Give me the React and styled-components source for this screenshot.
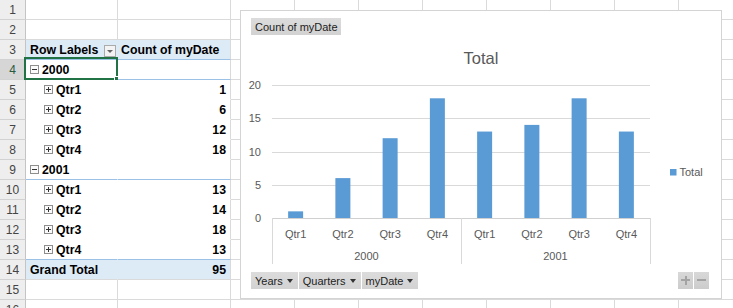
import React from 'react';
import styled, { createGlobalStyle } from 'styled-components';

const GlobalStyle = createGlobalStyle`
  html, body { margin: 0; padding: 0; background: #fff; overflow: hidden; }
  body { font-family: "Liberation Sans", Arial, sans-serif; }
  #root { width: 733px; height: 308px; }
`;

const GRID = '#dadada';
const PIVOT_LINE = '#9bc2e6';
const PIVOT_BG = '#ddebf7';

const Page = styled.div`
  position: relative;
  width: 733px;
  height: 308px;
  overflow: hidden;
`;

const Sheet = styled.div`
  display: flex;
  flex-direction: column;
`;

const Row = styled.div`
  display: grid;
  grid-template-columns: 26px 92px 113px repeat(8, 64px);
  height: 20px;
  flex: none;
`;

const RowHead = styled.div`
  box-sizing: border-box;
  border-right: 1px solid #c4c4c4;
  border-bottom: 1px solid #d2d2d2;
  background: ${p => (p.$selected ? '#d6d6d6' : '#eeeeee')};
  color: ${p => (p.$selected ? '#2a5a3e' : '#444')};
  font-family: "Liberation Sans", Arial, sans-serif;
  font-size: 12px;
  display: flex;
  align-items: center;
  justify-content: center;
`;

const Cell = styled.div`
  position: relative;
  box-sizing: border-box;
  border-right: 1px solid ${p => p.$right || GRID};
  border-bottom: 1px solid ${p => p.$bottom || GRID};
  background: ${p => p.$bg || '#fff'};
  display: flex;
  align-items: center;
  justify-content: ${p => (p.$align === 'right' ? 'flex-end' : 'flex-start')};
  padding: 0 ${p => (p.$padRight ?? 4)}px 0 ${p => p.$indent ?? 4}px;
  font-size: 12.3px;
  font-weight: bold;
  color: #000;
  white-space: nowrap;
  gap: 3px;
`;

const Toggle = styled.span`
  position: relative;
  box-sizing: border-box;
  width: 9px;
  height: 9px;
  border: 1px solid #8e8e8e;
  background: #fafafa;
  flex: none;
  &::before {
    content: '';
    position: absolute;
    left: 1px;
    right: 1px;
    top: 3px;
    height: 1px;
    background: #333;
  }
  &::after {
    content: '';
    position: absolute;
    top: 1px;
    bottom: 1px;
    left: 3px;
    width: 1px;
    background: #333;
    display: ${p => (p.$open ? 'none' : 'block')};
  }
`;

const FilterButton = styled.span`
  position: relative;
  box-sizing: border-box;
  margin-left: auto;
  align-self: flex-end;
  margin-bottom: 2px;
  width: 12px;
  height: 12px;
  border: 1px solid #ababab;
  background: #f3f3f3;
  &::after {
    content: '';
    position: absolute;
    left: 2px;
    top: 4px;
    border-left: 3px solid transparent;
    border-right: 3px solid transparent;
    border-top: 3px solid #666;
  }
`;

const Selection = styled.div`
  position: absolute;
  top: -3px;
  left: -2px;
  right: -1px;
  bottom: -1px;
  border: 2px solid #217346;
  pointer-events: none;
`;

const FillHandle = styled.span`
  position: absolute;
  right: -5px;
  bottom: -5px;
  width: 5px;
  height: 5px;
  background: #217346;
  border: 1px solid #fff;
`;

/* ---------- Chart ---------- */

const ChartPanel = styled.div`
  position: absolute;
  left: 240px;
  top: 10px;
  width: 482px;
  height: 289px;
  box-sizing: border-box;
  border: 1px solid #d4d4d4;
  background: #fff;
  display: flex;
  flex-direction: column;
  font-family: "Liberation Sans", Arial, sans-serif;
`;

const TopBar = styled.div`
  display: flex;
  padding: 7px 0 0 10px;
`;

const FieldButton = styled.div`
  display: flex;
  align-items: center;
  gap: 4px;
  height: 17px;
  box-sizing: border-box;
  padding: 0 ${p => (p.$arrow ? 5 : 3)}px 0 4px;
  background: linear-gradient(#dcdcdc, #d2d2d2);
  color: #222;
  font-size: 11px;
  white-space: nowrap;
`;

const Caret = styled.span`
  width: 0;
  height: 0;
  border-left: 3.5px solid transparent;
  border-right: 3.5px solid transparent;
  border-top: 4px solid #333;
`;

const Title = styled.div`
  margin-top: 13px;
  height: 20px;
  line-height: 20px;
  font-size: 16.5px;
  color: #595959;
  text-align: center;
`;

const Plot = styled.svg`
  display: block;
  flex: none;
`;

const BottomBar = styled.div`
  display: flex;
  align-items: center;
  gap: 1px;
  padding: 4px 12px 0 10px;
`;

const Spacer = styled.div`
  flex: 1;
`;

const ZoomButton = styled.div`
  position: relative;
  width: 15px;
  height: 17px;
  background: linear-gradient(#d8d8d8, #cccccc);
  &::before {
    content: '';
    position: absolute;
    left: 3px;
    top: 7px;
    width: 9px;
    height: 2px;
    background: #a3a3a3;
  }
  &::after {
    content: '';
    position: absolute;
    left: 6.5px;
    top: 3.5px;
    width: 2px;
    height: 9px;
    background: #a3a3a3;
    display: ${p => (p.$plus ? 'block' : 'none')};
  }
`;

const data = [
  { year: '2000', q: 'Qtr1', v: 1 },
  { year: '2000', q: 'Qtr2', v: 6 },
  { year: '2000', q: 'Qtr3', v: 12 },
  { year: '2000', q: 'Qtr4', v: 18 },
  { year: '2001', q: 'Qtr1', v: 13 },
  { year: '2001', q: 'Qtr2', v: 14 },
  { year: '2001', q: 'Qtr3', v: 18 },
  { year: '2001', q: 'Qtr4', v: 13 },
];

function ChartBody() {
  const left = 31;
  const right = 409;
  const zero = 150;
  const unit = 133 / 20;
  const cat = (right - left) / data.length;
  const barW = 15;
  const text = { fontFamily: '"Liberation Sans", Arial, sans-serif', fontSize: 11, fill: '#595959' };
  return (
    <Plot width="480" height="200" viewBox="0 0 480 200">
      {[0, 5, 10, 15, 20].map(t => {
        const y = Math.round(zero - t * unit) + 0.5;
        return (
          <g key={t}>
            <line x1={left} x2={right} y1={y} y2={y} stroke={t === 0 ? '#d0d0d0' : '#d9d9d9'} strokeWidth="1" />
            <text x="20" y={y + 3.5} textAnchor="end" {...text}>{t}</text>
          </g>
        );
      })}
      {data.map((d, i) => {
        const cx = left + cat * (i + 0.5);
        const h = d.v * unit;
        return (
          <g key={i}>
            <rect x={cx - barW / 2} y={zero - h} width={barW} height={h} fill="#5b9bd5" />
            <text x={cx} y="170" textAnchor="middle" {...text}>{d.q}</text>
          </g>
        );
      })}
      {[left, (left + right) / 2, right].map((x, i) => (
        <line key={i} x1={Math.round(x) + 0.5} x2={Math.round(x) + 0.5} y1={zero} y2="196" stroke="#d9d9d9" />
      ))}
      <text x={left + cat * 2} y="192" textAnchor="middle" {...text}>2000</text>
      <text x={left + cat * 6} y="192" textAnchor="middle" {...text}>2001</text>
      <rect x="429" y="101" width="6.5" height="6.5" fill="#5b9bd5" />
      <text x="438.5" y="107.5" {...text}>Total</text>
    </Plot>
  );
}

function Chart() {
  return (
    <ChartPanel>
      <TopBar>
        <FieldButton>Count of myDate</FieldButton>
      </TopBar>
      <Title>Total</Title>
      <ChartBody />
      <BottomBar>
        {['Years', 'Quarters', 'myDate'].map(l => (
          <FieldButton key={l} $arrow>
            {l}
            <Caret />
          </FieldButton>
        ))}
        <Spacer />
        <ZoomButton $plus />
        <ZoomButton />
      </BottomBar>
    </ChartPanel>
  );
}

/* ---------- Sheet rows ---------- */

const EmptyCells = ({ count }) =>
  Array.from({ length: count }, (_, i) => <Cell key={i} />);

function SheetRow({ n, kind, label, value, selected }) {
  let a = null;
  let b = null;
  if (kind === 'header') {
    a = (
      <Cell $bg={PIVOT_BG} $bottom={PIVOT_LINE} $right="transparent" $padRight={1}>
        Row Labels
        <FilterButton />
      </Cell>
    );
    b = (
      <Cell $bg={PIVOT_BG} $bottom={PIVOT_LINE} $indent={3}>
        Count of myDate
      </Cell>
    );
  } else if (kind === 'year') {
    a = (
      <Cell $bottom={PIVOT_LINE} $right="transparent">
        <Toggle $open />
        {label}
        {selected && (
          <Selection>
            <FillHandle />
          </Selection>
        )}
      </Cell>
    );
    b = <Cell $bottom={PIVOT_LINE} />;
  } else if (kind === 'qtr' || kind === 'qtrLast') {
    const bottom = kind === 'qtrLast' ? PIVOT_LINE : 'transparent';
    a = (
      <Cell $bottom={bottom} $right="transparent" $indent={18}>
        <Toggle />
        {label}
      </Cell>
    );
    b = (
      <Cell $bottom={bottom} $align="right">
        {value}
      </Cell>
    );
  } else if (kind === 'total') {
    a = (
      <Cell $bg={PIVOT_BG} $right="transparent">
        Grand Total
      </Cell>
    );
    b = (
      <Cell $bg={PIVOT_BG} $align="right">
        {value}
      </Cell>
    );
  } else {
    a = <Cell />;
    b = <Cell />;
  }
  return (
    <Row>
      <RowHead $selected={selected}>{n}</RowHead>
      {a}
      {b}
      <EmptyCells count={8} />
    </Row>
  );
}

const rows = [
  { n: 1 },
  { n: 2 },
  { n: 3, kind: 'header' },
  { n: 4, kind: 'year', label: '2000', selected: true },
  { n: 5, kind: 'qtr', label: 'Qtr1', value: 1 },
  { n: 6, kind: 'qtr', label: 'Qtr2', value: 6 },
  { n: 7, kind: 'qtr', label: 'Qtr3', value: 12 },
  { n: 8, kind: 'qtr', label: 'Qtr4', value: 18 },
  { n: 9, kind: 'year', label: '2001' },
  { n: 10, kind: 'qtr', label: 'Qtr1', value: 13 },
  { n: 11, kind: 'qtr', label: 'Qtr2', value: 14 },
  { n: 12, kind: 'qtr', label: 'Qtr3', value: 18 },
  { n: 13, kind: 'qtrLast', label: 'Qtr4', value: 13 },
  { n: 14, kind: 'total', value: 95 },
  { n: 15 },
  { n: 16 },
];

export default function App() {
  return (
    <Page>
      <GlobalStyle />
      <Sheet>
        {rows.map(r => (
          <SheetRow key={r.n} {...r} />
        ))}
      </Sheet>
      <Chart />
    </Page>
  );
}
